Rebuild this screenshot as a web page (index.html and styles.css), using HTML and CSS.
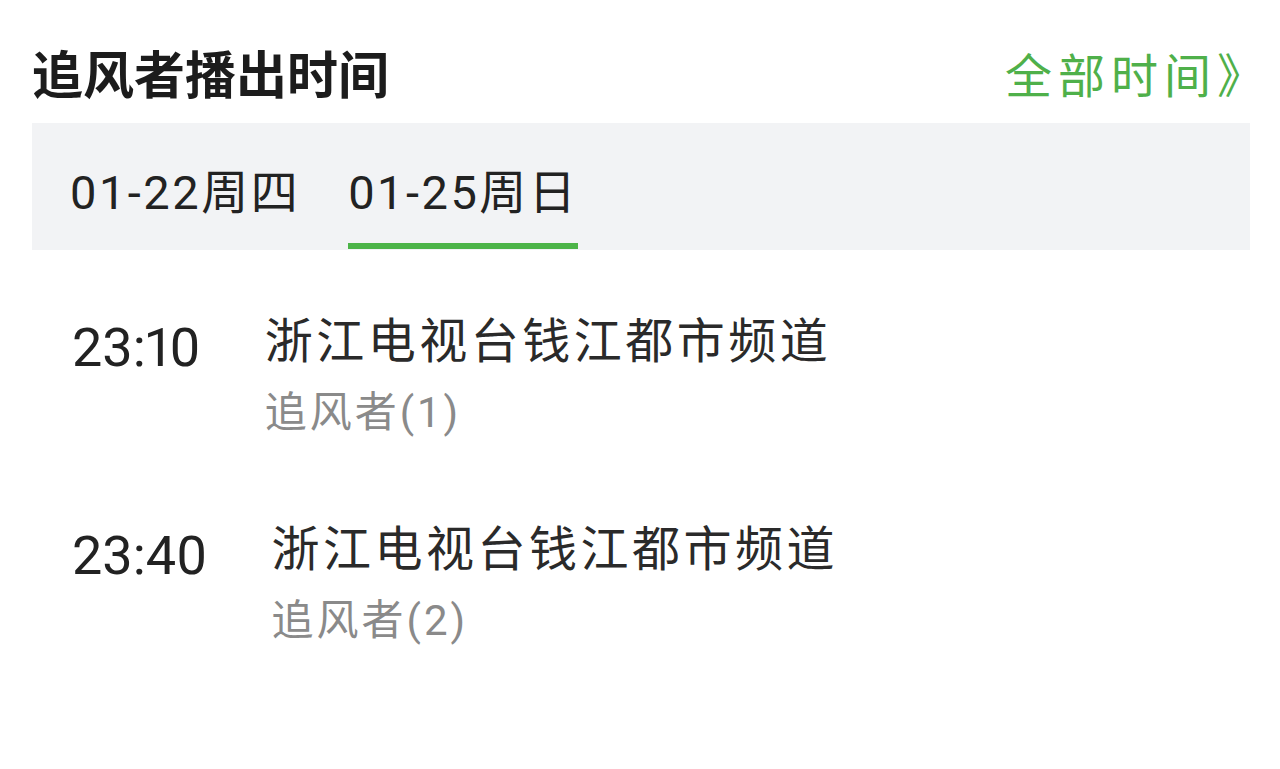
FILE: index.html
```html
<!DOCTYPE html>
<html lang="zh-CN">
<head>
<meta charset="utf-8">
<title>追风者播出时间</title>
<link rel="stylesheet" href="styles.css">
</head>
<body>
<div class="page">
  <div class="header">
    <h1 class="title">追风者播出时间</h1>
    <a class="more" href="#">全部时间》</a>
  </div>
  <div class="tabs">
    <div class="tab">01-22周四</div>
    <div class="tab active">01-25周日</div>
  </div>
  <div class="list">
    <div class="row">
      <div class="time">23:10</div>
      <div class="info">
        <div class="channel">浙江电视台钱江都市频道</div>
        <div class="episode">追风者(1)</div>
      </div>
    </div>
    <div class="row">
      <div class="time">23:40</div>
      <div class="info">
        <div class="channel">浙江电视台钱江都市频道</div>
        <div class="episode">追风者(2)</div>
      </div>
    </div>
  </div>
</div>
</body>
</html>
```
FILE: styles.css
```css
html, body {
  margin: 0;
  padding: 0;
  background: #ffffff;
}
body {
  font-family: "Roboto", "Noto Sans CJK SC", "Noto Sans", sans-serif;
  color: #222222;
}
.page {
  padding: 0 30px 0 32px;
}
.header {
  height: 93px;
  padding-top: 30px;
  display: flex;
  align-items: center;
  justify-content: space-between;
}
.title {
  margin: 0;
  font-size: 51px;
  font-weight: 700;
  color: #1c1c1c;
  line-height: 1;
}
.more {
  font-size: 47px;
  letter-spacing: 6px;
  color: #4fb04a;
  text-decoration: none;
  line-height: 1;
  margin-right: -20px;
}
.tabs {
  height: 127px;
  background: #f2f3f5;
  display: flex;
  padding-left: 38px;
  gap: 48px;
  box-sizing: border-box;
}
.tab {
  padding-top: 11px;
  display: flex;
  align-items: center;
  font-size: 47px;
  letter-spacing: 2.5px;
  color: #222222;
  border-bottom: 6px solid transparent;
  box-sizing: border-box;
  height: 126px;
}
.tab.active {
  border-bottom-color: #4cb448;
}
.list {
  padding-top: 62px;
  padding-left: 40px;
  display: flex;
  flex-direction: column;
  gap: 66px;
}
.row {
  display: flex;
  gap: 64px;
}
.time {
  font-size: 54px;
  line-height: 60px;
  margin-top: 6px;
  color: #222222;
  font-variant-numeric: proportional-nums;
}
.channel {
  font-size: 48px;
  letter-spacing: 3.5px;
  line-height: 60px;
  color: #2a2a2a;
}
.episode {
  font-size: 42px;
  letter-spacing: 3px;
  line-height: 82px;
  color: #8a8a8a;
}
```
